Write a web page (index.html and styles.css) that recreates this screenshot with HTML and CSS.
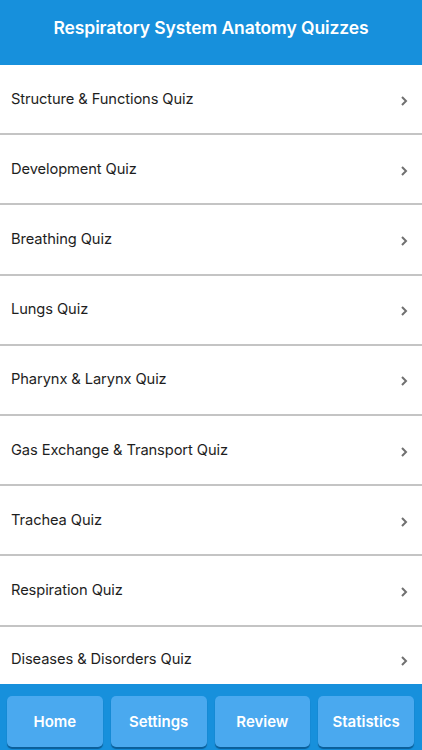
FILE: index.html
```html
<!DOCTYPE html>
<html>
<head>
<meta charset="utf-8">
<link rel="stylesheet" href="styles.css">
</head>
<body>
<div class="app">
  <header class="header">Respiratory System Anatomy Quizzes</header>
  <ul class="list">
    <li class="row"><span>Structure &amp; Functions Quiz</span><svg class="chev" viewBox="0 0 8 12"><path d="M2 2l4 4-4 4"/></svg></li>
    <li class="row"><span>Development Quiz</span><svg class="chev" viewBox="0 0 8 12"><path d="M2 2l4 4-4 4"/></svg></li>
    <li class="row"><span>Breathing Quiz</span><svg class="chev" viewBox="0 0 8 12"><path d="M2 2l4 4-4 4"/></svg></li>
    <li class="row"><span>Lungs Quiz</span><svg class="chev" viewBox="0 0 8 12"><path d="M2 2l4 4-4 4"/></svg></li>
    <li class="row"><span>Pharynx &amp; Larynx Quiz</span><svg class="chev" viewBox="0 0 8 12"><path d="M2 2l4 4-4 4"/></svg></li>
    <li class="row"><span>Gas Exchange &amp; Transport Quiz</span><svg class="chev" viewBox="0 0 8 12"><path d="M2 2l4 4-4 4"/></svg></li>
    <li class="row"><span>Trachea Quiz</span><svg class="chev" viewBox="0 0 8 12"><path d="M2 2l4 4-4 4"/></svg></li>
    <li class="row"><span>Respiration Quiz</span><svg class="chev" viewBox="0 0 8 12"><path d="M2 2l4 4-4 4"/></svg></li>
    <li class="row last"><span>Diseases &amp; Disorders Quiz</span><svg class="chev" viewBox="0 0 8 12"><path d="M2 2l4 4-4 4"/></svg></li>
  </ul>
  <nav class="footer">
    <button class="btn">Home</button>
    <button class="btn">Settings</button>
    <button class="btn">Review</button>
    <button class="btn">Statistics</button>
  </nav>
</div>
</body>
</html>
```
FILE: styles.css
```css
* { box-sizing: border-box; }
html, body { margin: 0; padding: 0; }
body {
  font-family: Inter, "Liberation Sans", Arial, sans-serif;
  background: #fff;
  width: 422px;
  height: 750px;
  overflow: hidden;
}
.app {
  display: flex;
  flex-direction: column;
  height: 750px;
}
.header {
  height: 65px;
  background: #1790dc;
  color: #fff;
  font-weight: 600;
  font-size: 17.5px;
  display: flex;
  justify-content: center;
  padding-top: 17px;
  letter-spacing: -0.1px;
}
.list {
  list-style: none;
  margin: 0;
  padding: 0;
  flex: 1;
  overflow: hidden;
}
.row {
  height: 70.2px;
  display: flex;
  align-items: center;
  justify-content: space-between;
  padding: 0 14px 1px 11px;
  border-bottom: 2px solid #c4c4c4;
  font-size: 14.7px;
  color: #1e1e1e;
  letter-spacing: -0.1px;
}
.row.last { border-bottom: none; height: 57px; padding-top: 9px; }
.chev {
  width: 8px;
  height: 12px;
  fill: none;
  stroke: #707070;
  stroke-width: 2;
  margin-top: 4px;
}
.footer {
  height: 66px;
  background: #1790dc;
  display: grid;
  grid-template-columns: repeat(4, 1fr);
  gap: 8px;
  padding: 12px 8px 3px 7px;
}
.btn {
  background: #4aa9ef;
  border: none;
  border-radius: 5px;
  box-shadow: 0 2px 1px #0b5f9a;
  color: #fff;
  font-family: inherit;
  font-weight: 600;
  font-size: 15px;
  padding: 0;
}
```
